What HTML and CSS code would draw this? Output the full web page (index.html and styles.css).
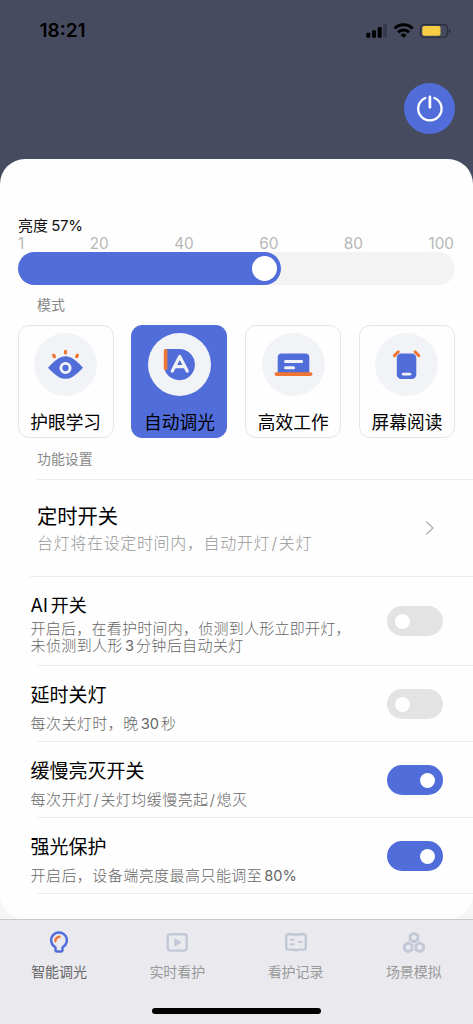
FILE: index.html
```html
<!DOCTYPE html>
<html lang="zh-CN">
<head>
<meta charset="utf-8">
<meta name="viewport" content="width=device-width, initial-scale=1">
<title>智能调光</title>
<link rel="stylesheet" href="styles.css">
</head>
<body>
<div class="app">
  <header class="hero">
    <div class="status">
      <span class="clock">18:21</span>
      <svg class="status-icons" width="86" height="16" viewBox="0 0 86 16">
        <rect x="0.3" y="9.7" width="4" height="5" rx="1"/>
        <rect x="6" y="7.2" width="4" height="7.5" rx="1"/>
        <rect x="11.7" y="4" width="4" height="10.7" rx="1"/>
        <rect x="17.3" y="1" width="3.7" height="13.7" rx="1" fill="#363a4c"/>
        <g fill="none" stroke="#000" stroke-width="2.9">
          <path d="M28.6 5.5a12.6 12.6 0 0 1 18 0"/>
          <path d="M32.1 9.2a7.8 7.8 0 0 1 11 0"/>
        </g>
        <path d="M34.6 11.9a4.3 4.3 0 0 1 6 0L37.6 14.7Z"/>
        <rect x="54.5" y="1.6" width="26.8" height="12.6" rx="3.4" fill="none" stroke="#292c38" stroke-width="1.1"/>
        <rect x="56.3" y="3.1" width="18.2" height="9.7" rx="1.8" fill="#f6cd45"/>
        <path d="M82.8 5.8q1.7.6 1.7 2.2t-1.7 2.2Z" fill="#292c38"/>
      </svg>
    </div>
    <button class="power" aria-label="电源">
      <svg width="51" height="51" viewBox="0 0 51 51" fill="none" stroke="#fff" stroke-width="2.3" stroke-linecap="round">
        <path d="M21.3 15a11.7 11.7 0 1 0 9.2 0"/><path d="M25.9 13.8v10.5" stroke-width="2.7"/>
      </svg>
    </button>
  </header>

  <main class="backdrop">
    <section class="sheet">
      <div class="bright">亮度 <span>57%</span></div>
      <div class="scale"><span>1</span><span>20</span><span>40</span><span>60</span><span>80</span><span>100</span></div>
      <div class="slider"><div class="slider-fill"><i></i></div></div>
      <h2 class="caption">模式</h2>
      <div class="modes">
        <div class="mode">
          <svg width="63" height="63" viewBox="0 0 63 63">
            <circle cx="31.5" cy="31.5" r="31.5" fill="#f1f3f6"/>
            <path d="M14 34.8Q20 28 25 25Q31.5 21.7 38 25Q43 28 49 34.8Q43 41.3 38 44.2Q31.5 47.5 25 44.2Q20 41.3 14 34.8Z" fill="#506dda"/>
            <circle cx="31.5" cy="35" r="4.6" fill="none" stroke="#f1f3f6" stroke-width="2.9"/>
            <g stroke="#ee7533" stroke-width="3.2" stroke-linecap="round"><path d="M31.5 18.4v1.6M19.7 22.2l.7 1.5M43.3 22.2l-.7 1.5"/></g>
          </svg>
          <span>护眼学习</span>
        </div>
        <div class="mode active">
          <svg width="63" height="63" viewBox="0 0 63 63">
            <circle cx="31.5" cy="31.5" r="31.5" fill="#f1f3f6"/>
            <path d="M17 16H31.8A15.6 15.6 0 1 1 16.5 36.5Z" fill="#506dda"/>
            <rect x="15.8" y="16" width="3.6" height="21" rx="1.5" fill="#ee7533"/>
            <path d="M24.3 38L31.7 23.5L39.2 38M27 33.6H36.5" fill="none" stroke="#f1f3f6" stroke-width="3.2" stroke-linecap="round" stroke-linejoin="round"/>
          </svg>
          <span>自动调光</span>
        </div>
        <div class="mode">
          <svg width="63" height="63" viewBox="0 0 63 63">
            <circle cx="31.5" cy="31.5" r="31.5" fill="#f1f3f6"/>
            <path d="M15.7 40V24.4q0-4 4-4H43.3q4 0 4 4V40Z" fill="#506dda"/>
            <rect x="12.5" y="39.2" width="38" height="3.7" rx="1.8" fill="#ee7533"/>
            <path d="M23.5 28.5h16.1M23.5 34.8h8" stroke="#f1f3f6" stroke-width="3" stroke-linecap="round"/>
          </svg>
          <span>高效工作</span>
        </div>
        <div class="mode">
          <svg width="63" height="63" viewBox="0 0 63 63">
            <circle cx="31.5" cy="31.5" r="31.5" fill="#f1f3f6"/>
            <rect x="21.8" y="20.5" width="19.5" height="25.6" rx="4.5" fill="#506dda"/>
            <path d="M28.3 41.2h6.6" stroke="#f1f3f6" stroke-width="2.8" stroke-linecap="round"/>
            <path d="M23.3 18.8l-3.8 3.8M40 18.8l3.8 3.8" stroke="#ee7533" stroke-width="3" stroke-linecap="round"/>
          </svg>
          <span>屏幕阅读</span>
        </div>
      </div>
      <h2 class="caption settings-caption">功能设置</h2>

      <div class="timer">
        <div>
          <h3>定时开关</h3>
          <p>台灯将在设定时间内，自动开灯<span class="slash">/</span>关灯</p>
        </div>
        <svg width="10" height="16" viewBox="0 0 10 16" fill="none" stroke="#a9a9a9" stroke-width="1.3"><path d="M1.3 1.6L8 8L1.3 14.4"/></svg>
      </div>
      <div class="row row-ai">
        <div>
          <h3>AI<span class="gap-left">开关</span></h3>
          <p><span class="tight">开启后，在看护时间内，侦测到人形立即开灯，</span><br>未侦测到人形<span class="num">3</span>分钟后自动关灯</p>
        </div>
        <div class="toggle"><i></i></div>
      </div>
      <div class="row">
        <div>
          <h3>延时关灯</h3>
          <p>每次关灯时，晚<span class="num">30</span>秒</p>
        </div>
        <div class="toggle"><i></i></div>
      </div>
      <div class="row">
        <div>
          <h3>缓慢亮灭开关</h3>
          <p>每次开灯<span class="slash">/</span>关灯均缓慢亮起<span class="slash">/</span>熄灭</p>
        </div>
        <div class="toggle on"><i></i></div>
      </div>
      <div class="row">
        <div>
          <h3>强光保护</h3>
          <p>开启后，设备端亮度最高只能调至<span class="num">80%</span></p>
        </div>
        <div class="toggle on"><i></i></div>
      </div>
    </section>
  </main>

  <footer class="tabbar">
    <nav class="tabs">
      <div class="tab current">
        <svg width="24" height="24" viewBox="0 0 24 24" fill="none">
          <path d="M8.5 20V17.2A7.8 7.8 0 1 1 15.5 17.2V20Q15.5 21.5 14 21.5H10Q8.5 21.5 8.5 20Z" stroke="#506dda" stroke-width="2.4" stroke-linejoin="round"/>
          <path d="M8.3 11.3Q8.5 7.4 12.6 6.7" stroke="#ee7533" stroke-width="2.3" stroke-linecap="round"/>
        </svg>
        <span>智能调光</span>
      </div>
      <div class="tab">
        <svg width="24" height="24" viewBox="0 0 24 24" fill="none" stroke="#c3c8d7" stroke-width="2.4" stroke-linejoin="round">
          <rect x="2.7" y="4.2" width="19" height="16.4" rx="2.5"/>
          <path d="M10.2 9.7L14.9 12.4L10.2 15.1Z" fill="#c3c8d7" stroke-width="2"/>
        </svg>
        <span>实时看护</span>
      </div>
      <div class="tab">
        <svg width="24" height="24" viewBox="0 0 24 24" fill="none" stroke="#c3c8d7" stroke-width="2.4" stroke-linejoin="round">
          <path d="M12 5.3Q10.8 4.2 9.3 4.2H4Q2.2 4.2 2.2 6V17.7Q2.2 19.6 4 19.6H9.5Q10.8 19.6 12 20.6Q13.2 19.6 14.5 19.6H20Q21.8 19.6 21.8 17.7V6Q21.8 4.2 20 4.2H14.7Q13.2 4.2 12 5.3Z"/>
          <path d="M6.5 9.7h3.2M6.5 14.2h3.2M14.6 12h3.4" stroke-linecap="round" stroke-width="2"/>
        </svg>
        <span>看护记录</span>
      </div>
      <div class="tab">
        <svg width="24" height="24" viewBox="0 0 24 24" fill="none" stroke="#c3c8d7" stroke-width="2.8" stroke-linejoin="round">
          <path d="M12 3.2L15.8 5.4V9.8L12 12L8.2 9.8V5.4Z"/>
          <path d="M6.3 12.9L10.1 15.1V19.5L6.3 21.7L2.5 19.5V15.1Z"/>
          <path d="M17.7 12.9L21.5 15.1V19.5L17.7 21.7L13.9 19.5V15.1Z"/>
        </svg>
        <span>场景模拟</span>
      </div>
    </nav>
    <div class="home-bar"></div>
  </footer>
</div>
</body>
</html>
```
FILE: styles.css
```css
* { box-sizing: border-box; }
body, h2, h3, p { margin: 0; font-weight: 400; }
svg { display: block; flex: none; }
body {
  font-family: Inter, "Noto Sans CJK SC", sans-serif;
  background: #464b5f;
  color: #111;
}
.app {
  width: 473px;
  height: 1024px;
  display: flex;
  flex-direction: column;
  overflow: hidden;
}
.hero {
  height: 159px;
  padding: 22px 18px 0 39.5px;
  display: flex;
  flex-direction: column;
}
.status {
  height: 17px;
  display: flex;
  align-items: center;
  justify-content: space-between;
  padding-right: 3px;
}
.clock { font-size: 19px; font-weight: 600; line-height: 17px; color: #000; }
.power {
  width: 51px;
  height: 51px;
  margin-top: 44px;
  padding: 0;
  align-self: flex-end;
  border: 0;
  border-radius: 50%;
  background: #506dda;
}
.backdrop { height: 760px; background: linear-gradient(#464b5f 50%, #f6f6f6 50%); }
.sheet {
  height: 760px;
  padding-top: 57px;
  border-radius: 25px;
  background: #fefefe;
}
.bright { margin-left: 18px; height: 20px; line-height: 20px; font-size: 15px; white-space: nowrap; word-spacing: -1px; }
.bright span { letter-spacing: -0.3px; }
.scale {
  display: flex;
  justify-content: space-between;
  height: 16px;
  margin: 0 19px 0 18px;
  line-height: 16px;
  font-size: 15.3px;
  color: #b8b8b8;
}
.slider { height: 33px; margin: 0 18px; border-radius: 17px; background: #f3f3f3; }
.slider-fill {
  width: 263px;
  height: 33px;
  padding-right: 4px;
  display: flex;
  align-items: center;
  justify-content: flex-end;
  border-radius: 17px;
  background: #506dda;
}
.slider-fill i { width: 25px; height: 25px; border-radius: 50%; background: #fff; }
.caption { height: 40px; padding-left: 37px; line-height: 40px; font-size: 13.9px; color: #888; }
.modes { display: flex; justify-content: space-between; margin: 0 18px 0 17.7px; }
.mode {
  width: 96px;
  height: 113px;
  padding-top: 7px;
  display: flex;
  flex-direction: column;
  align-items: center;
  border: 1px solid #e6e6e8;
  border-radius: 11px;
}
.mode.active { background: #506dda; border-color: #506dda; }
.mode span { margin-top: 14px; line-height: 26px; font-size: 17.7px; color: #000; white-space: nowrap; }
.settings-caption { height: 41px; line-height: 42px; }
.timer {
  height: 98px;
  margin-left: 30px;
  padding: 24px 38px 0 7px;
  display: flex;
  justify-content: space-between;
  border-bottom: 1px solid #ececec;
  background: linear-gradient(#ececec, #ececec) 7px 0 / 100% 1px no-repeat;
}
.timer svg { margin-top: 17px; }
.timer h3 { line-height: 28px; font-size: 20.3px; color: #000; }
.timer p { line-height: 25px; font-size: 16px; letter-spacing: 0.66px; color: #969696; }
.row {
  height: 76px;
  padding: 15px 30px 0 30.5px;
  display: flex;
  justify-content: space-between;
  background: linear-gradient(#ececec, #ececec) 37px 100% / 100% 1px no-repeat;
}
.row h3 { line-height: 30px; font-size: 19px; color: #000; white-space: nowrap; }
.row p { line-height: 26px; font-size: 15px; letter-spacing: 0.45px; color: #666; white-space: nowrap; }
.timer p, .row p { font-weight: 300; }
.row-ai { height: 89px; padding-top: 14px; }
.row-ai h3 { line-height: 29px; font-size: 18px; }
.row-ai p { line-height: 17.3px; letter-spacing: 0.4px; }
.tight { letter-spacing: 0.25px; }
.gap-left { margin-left: 3px; }
.num { margin: 0 2px; font-weight: 400; font-size: 14.6px; letter-spacing: 0; }
.slash { margin: 0 1.2px; }
.toggle {
  width: 56px;
  height: 30px;
  margin-top: 8px;
  padding: 0 8px;
  display: flex;
  align-items: center;
  border-radius: 15px;
  background: #e3e3e3;
}
.row-ai .toggle { margin-top: 15px; }
.toggle i { width: 15px; height: 15px; border-radius: 50%; background: #fff; }
.toggle.on { justify-content: flex-end; background: #506dda; }
.tabbar {
  height: 105px;
  padding-top: 10px;
  display: flex;
  flex-direction: column;
  align-items: center;
  border-top: 1px solid #cacacd;
  background: #e9e9ee;
}
.tabs { width: 100%; display: flex; }
.tab { flex: 1; display: flex; flex-direction: column; align-items: center; color: #999; }
.tab span { margin-top: 8px; line-height: 20px; font-size: 14px; }
.tab.current { color: #666; }
.home-bar { width: 169px; height: 6px; margin-top: 26px; border-radius: 3px; background: #000; }
```
